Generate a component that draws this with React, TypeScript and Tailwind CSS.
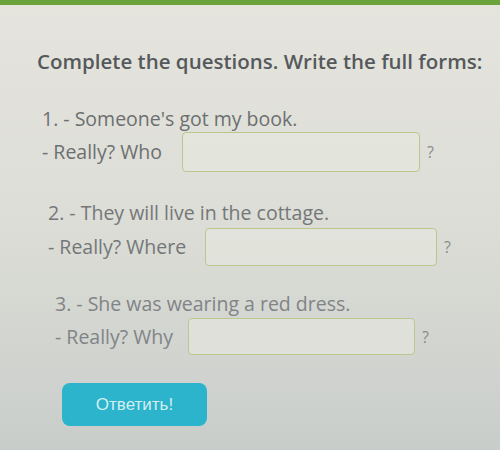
import React from "react";

interface Question {
  id: number;
  prompt: string;
  lead: string;
  offset: string;
  labelWidth: string;
  inputWidth: string;
  inputHeight: string;
  textMt: string;
  rowMt: string;
  tone: string;
}

const questions: Question[] = [
  {
    id: 1,
    prompt: "1. - Someone's got my book.",
    lead: "- Really? Who",
    offset: "ml-[42px]",
    labelWidth: "w-[140px]",
    inputWidth: "w-[238px]",
    inputHeight: "h-[40px]",
    textMt: "mt-[31px]",
    rowMt: "mt-0",
    tone: "text-[#6c6f71]",
  },
  {
    id: 2,
    prompt: "2. - They will live in the cottage.",
    lead: "- Really? Where",
    offset: "ml-[48px]",
    labelWidth: "w-[157px]",
    inputWidth: "w-[232px]",
    inputHeight: "h-[38px]",
    textMt: "mt-[28px]",
    rowMt: "mt-[2px]",
    tone: "text-[#747779]",
  },
  {
    id: 3,
    prompt: "3. - She was wearing a red dress.",
    lead: "- Really? Why",
    offset: "ml-[55px]",
    labelWidth: "w-[133px]",
    inputWidth: "w-[227px]",
    inputHeight: "h-[37px]",
    textMt: "mt-[25px]",
    rowMt: "mt-[1px]",
    tone: "text-[#818487]",
  },
];

const App: React.FC = () => {
  return (
    <div className="h-[450px] w-[500px] overflow-hidden bg-gradient-to-b from-[#e5e5de] via-[#dcddd6] to-[#c9cdca] font-['Open_Sans',sans-serif]">
      <div className="h-[5px] bg-[#6aa23b]" />

      <h1 className="ml-[37px] mt-[42px] text-[20.5px] font-semibold leading-[28px] text-[#56595c]">
        Complete the questions. Write the full forms:
      </h1>

      {questions.map((q) => (
        <div key={q.id} className={`${q.offset} ${q.tone}`}>
          <p className={`${q.textMt} text-[19.5px] leading-[26px]`}>{q.prompt}</p>
          <div className={`${q.rowMt} flex items-center`}>
            <span className={`${q.labelWidth} text-[19.5px] leading-[26px]`}>{q.lead}</span>
            <div
              className={`${q.inputWidth} ${q.inputHeight} rounded-[4px] border border-[#bcc68f] bg-[#e6e7df]/60`}
            />
            <span className="ml-[7px] text-[16px] text-[#8a8d8e]">?</span>
          </div>
        </div>
      ))}

      <button className="ml-[62px] mt-[28px] flex h-[43px] w-[145px] items-center justify-center rounded-[8px] bg-[#2bb4cb] font-['Liberation_Sans',sans-serif] text-[17px] text-[#d4eef2]">
        Ответить!
      </button>
    </div>
  );
};

export default App;
